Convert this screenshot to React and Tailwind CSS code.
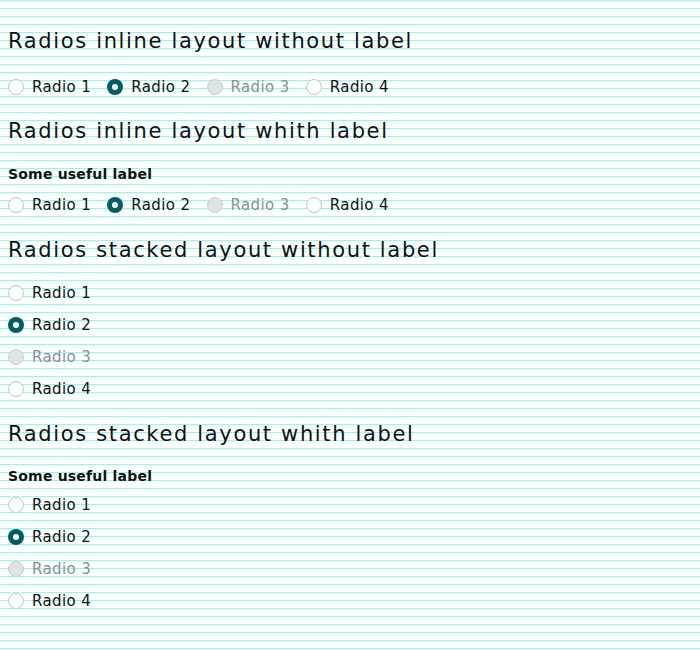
import React from "react";

function Radio({ label, checked, disabled }) {
  let circle;
  if (checked) {
    circle = (
      <span className="flex h-4 w-4 shrink-0 items-center justify-center rounded-full bg-[#005c66]">
        <span className="h-[6px] w-[6px] rounded-full bg-white" />
      </span>
    );
  } else if (disabled) {
    circle = <span className="h-4 w-4 shrink-0 rounded-full border border-[#c9cdd1] bg-[#dfe3e6]" />;
  } else {
    circle = <span className="h-4 w-4 shrink-0 rounded-full border border-[#c4c4c4] bg-white" />;
  }
  return (
    <label
      className={`flex h-6 items-center gap-2 text-[15px] leading-6 tracking-[0.4px] ${
        disabled ? "text-[#8a8f94]" : "text-[#111]"
      }`}
    >
      {circle}
      <span>{label}</span>
    </label>
  );
}

const items = [
  { label: "Radio 1" },
  { label: "Radio 2", checked: true },
  { label: "Radio 3", disabled: true },
  { label: "Radio 4" },
];

function Heading({ children, className }) {
  return (
    <h2 className={`h-8 text-[21px] font-normal leading-8 tracking-[1.65px] text-[#111] ${className}`}>
      {children}
    </h2>
  );
}

function Label({ children, className }) {
  return (
    <div className={`h-5 text-[14px] font-bold leading-5 tracking-[0.2px] text-[#111] ${className}`}>
      {children}
    </div>
  );
}

export default function App() {
  return (
    <div
      className="min-h-[650px] w-[700px] bg-white bg-[linear-gradient(#80ffff_1px,transparent_1px)] bg-[length:100%_8px] px-2 pt-[25px]"
      style={{ fontFamily: "'DejaVu Sans', sans-serif" }}
    >
      <Heading>Radios inline layout without label</Heading>
      <div className="mt-[18px] flex gap-4">
        {items.map((it) => (
          <Radio key={it.label} {...it} />
        ))}
      </div>

      <Heading className="mt-[16px]">Radios inline layout whith label</Heading>
      <Label className="mt-[17px]">Some useful label</Label>
      <div className="mt-[9px] flex gap-4">
        {items.map((it) => (
          <Radio key={it.label} {...it} />
        ))}
      </div>

      <Heading className="mt-[17px]">Radios stacked layout without label</Heading>
      <div className="mt-[15px] flex flex-col gap-2">
        {items.map((it) => (
          <Radio key={it.label} {...it} />
        ))}
      </div>

      <Heading className="mt-[17px]">Radios stacked layout whith label</Heading>
      <Label className="mt-[16px]">Some useful label</Label>
      <div className="mt-[7px] flex flex-col gap-2">
        {items.map((it) => (
          <Radio key={it.label} {...it} />
        ))}
      </div>
    </div>
  );
}
